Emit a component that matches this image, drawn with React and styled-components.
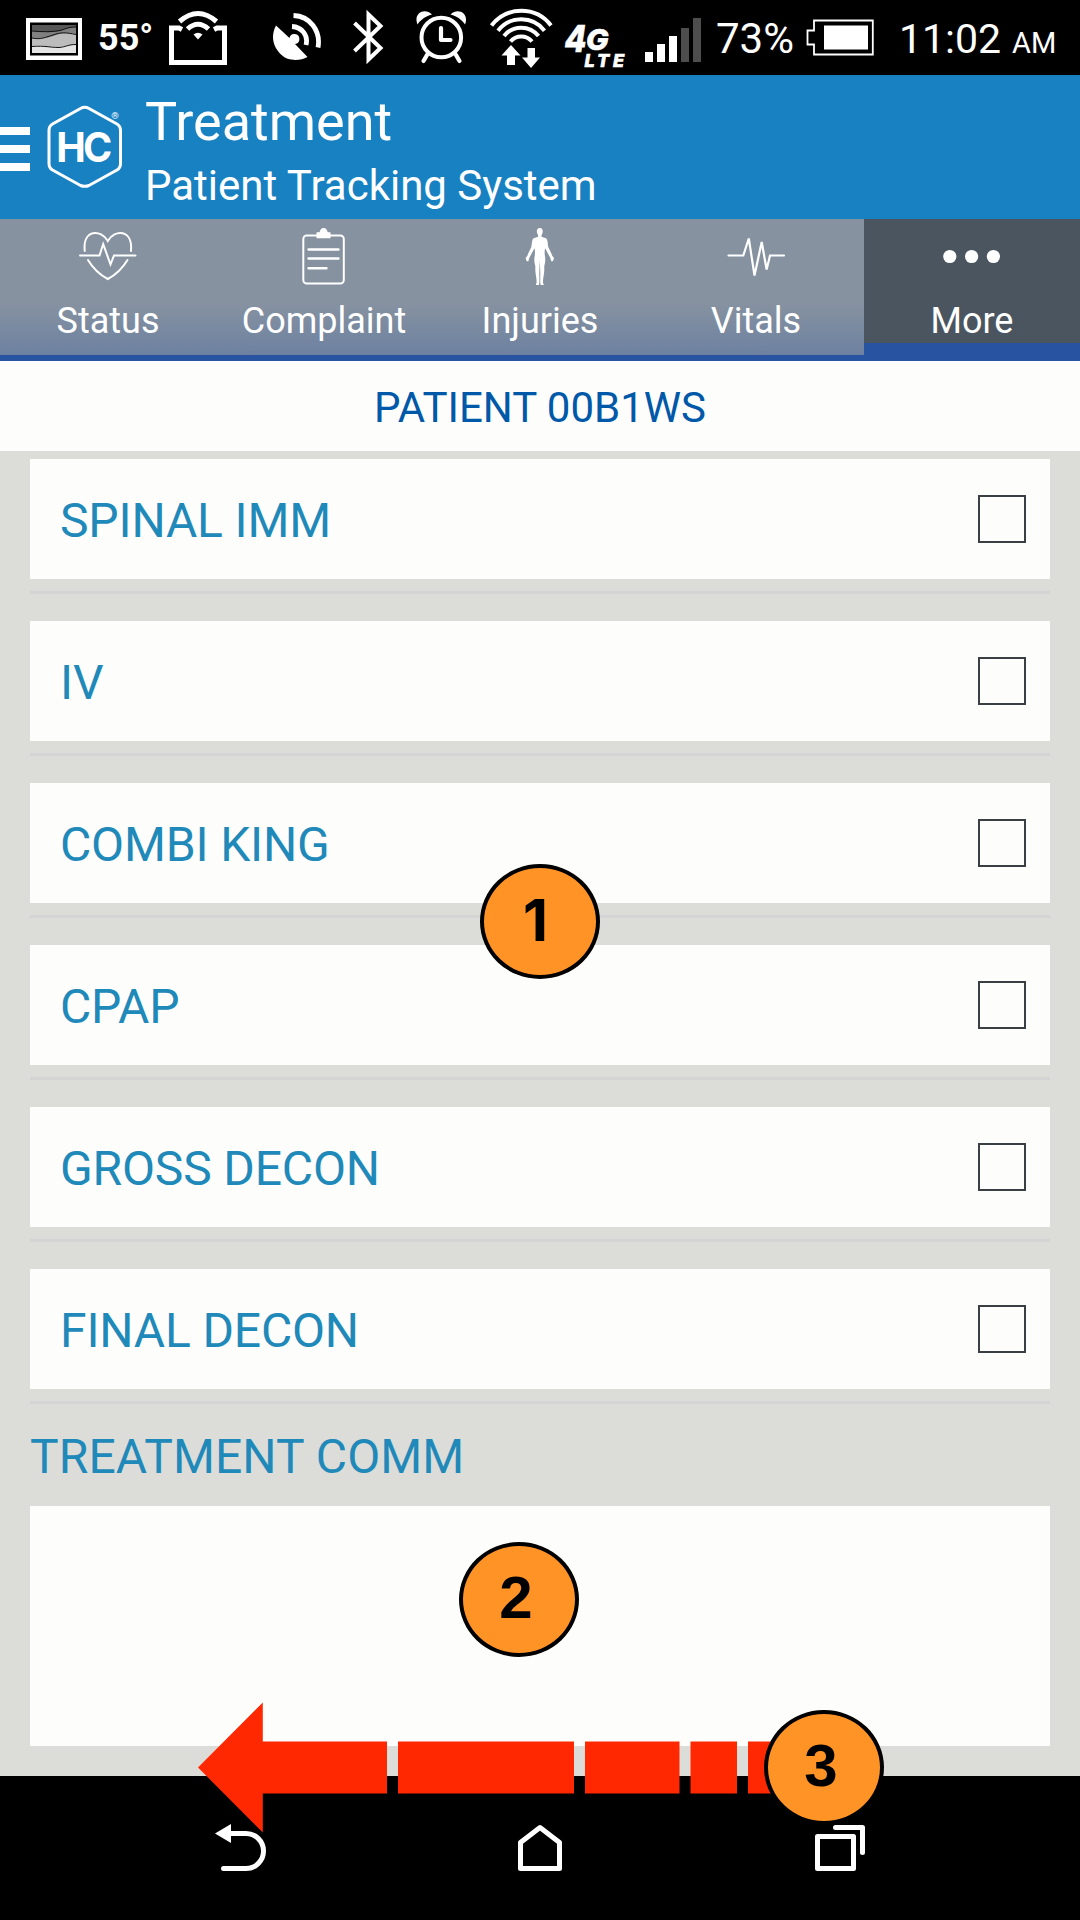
import React from 'react';
import styled, { createGlobalStyle } from 'styled-components';

const GlobalStyle = createGlobalStyle`
  *, *::before, *::after { box-sizing: border-box; }
  html, body { margin: 0; padding: 0; background: #000; }
  body { font-family: Roboto, "Noto Sans", sans-serif; }
  svg { display: block; flex: none; }
`;

const Screen = styled.div`
  position: relative;
  display: flex;
  flex-direction: column;
  width: 1080px;
  height: 1920px;
  overflow: hidden;
  background: #dcddd9;
`;

/* ---------- system status bar ---------- */

const StatusBar = styled.header`
  display: flex;
  align-items: center;
  flex: none;
  height: 75px;
  padding-left: 26px;
  background: #000;
  color: #fff;
  white-space: nowrap;
`;

const StatusIcon = styled.svg`
  height: 75px;
  width: ${(p) => p.$width}px;
  margin-left: ${(p) => p.$gap || 0}px;
`;

const StatusText = styled.span`
  flex: none;
  width: ${(p) => p.$width}px;
  margin-left: ${(p) => p.$gap}px;
  padding-top: ${(p) => p.$drop || 0}px;
  font-size: ${(p) => p.$size}px;
  font-weight: ${(p) => p.$weight || 400};
  line-height: 48px;
`;

/* ---------- app header ---------- */

const AppHeader = styled.div`
  display: flex;
  flex: none;
  height: 144px;
  background: #1881c2;
  color: #fff;
`;

const MenuButton = styled.div`
  display: flex;
  flex-direction: column;
  gap: 10px;
  width: 30px;
  padding-top: 52px;
`;

const MenuLine = styled.span`
  height: 8px;
  background: #fff;
`;

const Titles = styled.div`
  display: flex;
  flex-direction: column;
  padding: 15px 0 0 16px;
`;

const Title = styled.h1`
  margin: 0;
  font-size: 54px;
  font-weight: 400;
  line-height: 63px;
`;

const Subtitle = styled.p`
  margin: 8px 0 0;
  font-size: 42px;
  line-height: 50px;
`;

/* ---------- tabs ---------- */

const Tabs = styled.nav`
  display: grid;
  grid-template-columns: repeat(5, 216px);
  align-items: start;
  flex: none;
  height: 142px;
  background: #2853a0;
`;

const Tab = styled.div`
  display: flex;
  flex-direction: column;
  align-items: center;
  gap: 11px;
  height: ${(p) => (p.$active ? 124 : 136)}px;
  padding-top: 6px;
  background: ${(p) =>
    p.$active ? '#4b555f' : 'linear-gradient(#8692a0 0, #8692a0 84px, #6d81a1 136px)'};
  color: #fff;
`;

const TabLabel = styled.span`
  font-size: 36px;
  line-height: 42px;
`;

/* ---------- content ---------- */

const PatientBar = styled.div`
  display: flex;
  align-items: center;
  justify-content: center;
  flex: none;
  height: 90px;
  padding-top: 3px;
  background: #fdfdfb;
  color: #0058a9;
  font-size: 42px;
`;

const Content = styled.main`
  display: flex;
  flex-direction: column;
  flex: 1;
  padding: 8px 30px 0;
`;

const Item = styled.div`
  padding-bottom: 12px;
  border-bottom: 3px solid #d3d4d3;
  margin-bottom: ${(p) => (p.$last ? 0 : 27)}px;
`;

const ItemCard = styled.label`
  display: flex;
  align-items: center;
  justify-content: space-between;
  height: 120px;
  padding: 0 24px 0 30px;
  background: #fdfdfb;
  color: #1f89b9;
  font-size: 48px;
`;

const ItemLabel = styled.span`
  padding-top: 4px;
  line-height: 56px;
  letter-spacing: -0.15px;
`;

const CheckBox = styled.span`
  width: 48px;
  height: 48px;
  border: 2px solid #3a3f44;
`;

const FieldTitle = styled.h2`
  margin: 25px 0 21px;
  color: #1f89b9;
  font-size: 48px;
  font-weight: 400;
  line-height: 56px;
  letter-spacing: 0.1px;
`;

const CommentBox = styled.div`
  height: 240px;
  background: #fdfdfb;
`;

/* ---------- bottom navigation ---------- */

const BottomNav = styled.footer`
  display: flex;
  align-items: flex-start;
  justify-content: space-around;
  flex: none;
  height: 144px;
  padding: 40px 90px 0;
  background: #000;
`;

/* ---------- annotations over the screen ---------- */

const Swipe = styled.svg`
  position: absolute;
  left: 198px;
  top: 1702px;
`;

const Marker = styled.div`
  position: absolute;
  left: ${(p) => p.$x}px;
  top: ${(p) => p.$y}px;
  display: flex;
  align-items: center;
  justify-content: center;
  width: 120px;
  height: 115px;
  padding: 0 ${(p) => (p.$plain ? 9 : 6)}px 4px 0;
  border: 4px solid #000;
  border-radius: 50%;
  background: #ff9326;
  color: #000;
  font-family: ${(p) => (p.$plain ? 'Inter, ' : '')}"Liberation Sans", Arial, sans-serif;
  font-size: ${(p) => (p.$plain ? 58 : 60)}px;
  font-weight: 700;
`;

const stroke = (width, extra) => ({ fill: 'none', stroke: '#fff', strokeWidth: width, ...extra });

function WeatherIcon() {
  return (
    <StatusIcon $width={56} viewBox="26 0 56 75">
      <path d="M26 18h56v42H26z" fill="#fff" />
      <path d="M30 22.500h48v33H30z" fill="#000" />
      <path d="M32 25h44v28H32z" fill="#e4e4e4" />
      <path d="M32 25h44v20c-6-1-10 2-17 2-9 0-14-2-27-1z" fill="#bcbcbc" />
      <path d="M32 25h44v9c-9-2-14-1-20 1-8 4-15 3-24 3z" fill="#808080" />
      <path d="M32 25h44v2c-8 0-10 2-16 4-8 2-17 1-28 0z" fill="#585858" />
      <path
        d="M32 31c11 1 20 1 28-.5 6-1.500 8-3.500 16-3.500M32 38c9 2 14-1 21-3 8-3 13-2.500 23-.5M32 46.500c13-1 18 1 27 1 7-.5 9-3 17-3"
        fill="none"
        stroke="#111"
      />
    </StatusIcon>
  );
}

function HotspotIcon() {
  return (
    <StatusIcon $width={60} $gap={15} viewBox="168 0 60 75">
      <path d="M182 29.500L179 28h-7.500v34.500h53V28H217l-3 1.500" {...stroke(5)} />
      <path d="M179.500 21.500Q198 5.500 216.500 21.500M187.500 29Q198 19.500 208.500 29" {...stroke(5)} />
      <path d="M193.500 34.500Q198 31 202.500 34.500L198 39.500z" fill="#fff" />
    </StatusIcon>
  );
}

function DishIcon() {
  return (
    <StatusIcon $width={50} $gap={44} viewBox="272 0 50 75">
      <path
        d="M276 25.500l13.500 12.500a5 5 0 1 1 5.500 6L307.500 57C300 61 288 61.500 281 54.500 272 46 271 35 276 25.500z"
        fill="#fff"
      />
      <path d="M293.500 15.500C310 16 321 31 318 47.500M292 26.500c10 .5 16.500 9 14 18.500" {...stroke(4.8)} />
    </StatusIcon>
  );
}

function BluetoothIcon() {
  return (
    <StatusIcon $width={34} $gap={30} viewBox="352 0 34 75">
      <path d="M354.500 23L380.500 48 368.500 59.500v-45L380.500 26 354.500 51" {...stroke(4)} />
    </StatusIcon>
  );
}

function AlarmIcon() {
  return (
    <StatusIcon $width={52} $gap={30} viewBox="416 0 52 75">
      <circle cx="441.300" cy="37.500" r="19.800" {...stroke(4)} />
      <path d="M441 28v12h9.500M427 55l-3.500 6M456 55l3.500 6" {...stroke(4.2, { strokeLinecap: 'round', strokeLinejoin: 'round' })} />
      <path d="M417.500 24.500C413 14 424 7 432 14.500 425 16.500 420.500 20 417.500 24.500zM465 24.500C469.500 14 458.500 7 450.500 14.500 457.500 16.500 462 20 465 24.500z" fill="#fff" />
    </StatusIcon>
  );
}

function WifiIcon() {
  return (
    <StatusIcon $width={64} $gap={21} viewBox="489 0 64 75">
      <path
        d="M491.500 25.500a37.500 37.500 0 0 1 59.500 0M498 30.700a29.500 29.500 0 0 1 46.500 0M504 36a22 22 0 0 1 34.500 0M510.500 41.500a14 14 0 0 1 21.500 0"
        {...stroke(4)}
      />
      <path d="M511 45l9.500 10.500H515V65h-8v-9.500h-5.500zM527.500 48h7.500v9.500h5L531 68l-9-10.500h5.500z" fill="#fff" />
    </StatusIcon>
  );
}

function LteIcon() {
  return (
    <StatusIcon
      $width={64}
      $gap={11}
      viewBox="564 0 64 75"
      fill="#fff"
      stroke="#fff"
      strokeWidth="0.7"
      fontFamily="Inter, Roboto, sans-serif"
      fontWeight="800"
      fontStyle="italic"
    >
      <text>
        <tspan x="564.500" y="52" fontSize="37" textLength="22" lengthAdjust="spacingAndGlyphs">4</tspan>
        <tspan x="586" y="49.500" fontSize="29" textLength="22.500" lengthAdjust="spacingAndGlyphs">G</tspan>
        <tspan x="584.500" y="66.700" fontSize="18" textLength="39.500">LTE</tspan>
      </text>
    </StatusIcon>
  );
}

const SIGNAL = [10, 18, 26, 34, 44];

function SignalIcon() {
  return (
    <StatusIcon $width={56} $gap={17} viewBox="645 0 56 75">
      {SIGNAL.map((h, i) => (
        <rect key={h} x={645 + i * 12} y={62 - h} width="8" height={h} fill={i < 3 ? '#fff' : '#4d4d4d'} />
      ))}
    </StatusIcon>
  );
}

function BatteryIcon() {
  return (
    <StatusIcon $width={70} $gap={9} viewBox="805 0 70 75">
      <path d="M814 20.500h58.800v34H814V44.500h-6.500v-14h6.500z" {...stroke(1.8)} />
      <path d="M824 25.500h44v24h-44z" fill="#fff" />
    </StatusIcon>
  );
}

function Logo() {
  return (
    <svg width="99" height="144" viewBox="30 75 99 144">
      <path
        d="M89 108.500l28 15.500q3.500 2 3.500 6.500v33q0 4.500-3.500 6.500l-28 15.500q-4.300 1.500-8.500 0L52.500 170q-3.500-2-3.500-6.500v-33q0-4.500 3.500-6.500l28-15.500q4.200-2.500 8.500 0z"
        {...stroke(3)}
      />
      <text
        x="56.300"
        y="161.800"
        fontSize="41"
        fill="#fff"
        fontFamily="Inter, Roboto, sans-serif"
        fontWeight="700"
        letterSpacing="-3"
        textLength="53"
        lengthAdjust="spacingAndGlyphs"
      >
        HC
      </text>
      <text x="111.300" y="118.500" fontSize="9.500" fill="#fff" fontFamily="Roboto, sans-serif">®</text>
    </svg>
  );
}

function StatusTabIcon() {
  return (
    <svg width="64" height="64" viewBox="76 225 64 64">
      <g {...stroke(2, { strokeLinecap: 'round' })}>
        <path d="M84.700 251C82.500 229 101 229 107.800 241 114.500 229 133 229 131 251" />
        <path d="M88 260Q95.500 272.500 107.800 279 120 272.500 127.500 260" />
        <path d="M80 255.500h19.500l3.700-11.500 7.300 20.500 3.500-9h21.500" />
      </g>
    </svg>
  );
}

function ComplaintIcon() {
  return (
    <svg width="64" height="64" viewBox="292 225 64 64">
      <rect x="303.300" y="235.500" width="40.500" height="48" rx="3.500" {...stroke(2)} />
      <path d="M308.500 249.500h30M308.500 258.500h30M308.500 268.200h18" {...stroke(2.4, { strokeLinecap: 'round' })} />
      <path d="M317.500 232.300h2q1-4.300 4.100-4.300t4.100 4.300h2.800v6h-14v-6z" fill="#fff" />
    </svg>
  );
}

function InjuriesIcon() {
  return (
    <svg width="64" height="64" viewBox="508 225 64 64">
      <path
        fill="#fff"
        d="M539.800 228c2.300 0 3.200 1.800 2.900 4-.2 1.500-.9 2.500-1.200 3.200v1.600c1.500.8 4.700.8 5.500 2.700.8 2 .7 5 1.300 7.500.9 2.700 3.200 6 3.900 8.700l1.800 2.300-.9 3-1.700.4-1.300-3.900-5-9.300c-.5 2.300-.6 4.300-.3 6.800.8 4 .7 7-.5 11-.1 2 .2 5-.4 8-.4 3-1 5.700-.9 8.500l.8 2.400h-3.200l-.4-3 .1-10-.5-11.700-.5 11.700.1 10-.4 3h-3.200l.8-2.400c.1-2.800-.5-5.500-.9-8.500-.6-3-.3-6-.4-8-1.200-4-1.300-7-.5-11 .3-2.500.2-4.500-.3-6.800l-5 9.300-1.300 3.900-1.700-.4-.9-3 1.800-2.300c.7-2.700 3-6 3.900-8.700.6-2.500.5-5.500 1.300-7.500.8-1.900 4-1.900 5.500-2.700v-1.600c-.3-.7-1-1.700-1.200-3.200-.3-2.200.6-4 2.800-4z"
      />
    </svg>
  );
}

function VitalsIcon() {
  return (
    <svg width="64" height="64" viewBox="724 225 64 64">
      <path
        d="M728.500 255.500h14.800l5.500-17 5.700 37 7.200-33.500 4.900 27.500 3.400-14h14"
        {...stroke(2.2, { strokeLinecap: 'round', strokeMiterlimit: 3 })}
      />
    </svg>
  );
}

function MoreIcon() {
  return (
    <svg width="64" height="64" viewBox="940 225 64 64" fill="#fff">
      <circle cx="949.800" cy="256.500" r="6.600" />
      <circle cx="971.600" cy="256.500" r="6.600" />
      <circle cx="993.400" cy="256.500" r="6.600" />
    </svg>
  );
}

const TABS = [
  { label: 'Status', Icon: StatusTabIcon },
  { label: 'Complaint', Icon: ComplaintIcon },
  { label: 'Injuries', Icon: InjuriesIcon },
  { label: 'Vitals', Icon: VitalsIcon },
  { label: 'More', Icon: MoreIcon, active: true },
];

const ITEMS = ['SPINAL IMM', 'IV', 'COMBI KING', 'CPAP', 'GROSS DECON', 'FINAL DECON'];

const MARKERS = [
  { n: 1, x: 480, y: 864 },
  { n: 2, x: 459, y: 1542 },
  { n: 3, x: 764, y: 1710 },
];

export default function App() {
  return (
    <Screen>
      <GlobalStyle />
      <StatusBar>
        <WeatherIcon />
        <StatusText $size={36} $weight={700} $gap={16} $width={55}>55°</StatusText>
        <HotspotIcon />
        <DishIcon />
        <BluetoothIcon />
        <AlarmIcon />
        <WifiIcon />
        <LteIcon />
        <SignalIcon />
        <StatusText $size={42} $gap={15} $width={80} $drop={2}>73%</StatusText>
        <BatteryIcon />
        <StatusText $size={41} $gap={24} $width={108} $drop={2}>11:02</StatusText>
        <StatusText $size={29} $gap={5} $width={50} $drop={11}>AM</StatusText>
      </StatusBar>

      <AppHeader>
        <MenuButton>
          <MenuLine />
          <MenuLine />
          <MenuLine />
        </MenuButton>
        <Logo />
        <Titles>
          <Title>Treatment</Title>
          <Subtitle>Patient Tracking System</Subtitle>
        </Titles>
      </AppHeader>

      <Tabs>
        {TABS.map(({ label, Icon, active }) => (
          <Tab key={label} $active={active}>
            <Icon />
            <TabLabel>{label}</TabLabel>
          </Tab>
        ))}
      </Tabs>

      <PatientBar>PATIENT 00B1WS</PatientBar>

      <Content>
        {ITEMS.map((name, i) => (
          <Item key={name} $last={i === ITEMS.length - 1}>
            <ItemCard>
              <ItemLabel>{name}</ItemLabel>
              <CheckBox role="checkbox" aria-checked="false" />
            </ItemCard>
          </Item>
        ))}
        <FieldTitle>TREATMENT COMM</FieldTitle>
        <CommentBox />
      </Content>

      <BottomNav>
        <svg width="60" height="64" viewBox="210 1816 60 64">
          <path d="M231 1833.500h15a17.500 17.500 0 0 1 0 35h-22.500" {...stroke(5, { strokeLinecap: 'round' })} />
          <path d="M215 1833.500l16-9.500v19z" fill="#fff" />
        </svg>
        <svg width="60" height="64" viewBox="510 1816 60 64">
          <path d="M520.500 1868.500V1842.500L540 1827.500l19.500 15v26z" {...stroke(5, { strokeLinejoin: 'round' })} />
        </svg>
        <svg width="60" height="64" viewBox="810 1816 60 64">
          <path
            d="M817.500 1836.500h36v32h-36zM835.500 1827.500h27v25"
            {...stroke(5, { strokeLinejoin: 'round', strokeLinecap: 'round' })}
          />
        </svg>
      </BottomNav>

      <Swipe width="580" height="132" viewBox="198 1702 580 132" fill="#ff2800">
        <path d="M198 1767.500L262.800 1702.500v39H387v52H262.800v39z" />
        <path d="M398 1741.500h176v52H398zM585 1741.500h94.500v52H585zM690.500 1741.500H737v52h-46.500zM748 1741.500h28v52h-28z" />
      </Swipe>
      {MARKERS.map(({ n, x, y }) => (
        <Marker key={n} $x={x} $y={y} $plain={n === 1}>{n}</Marker>
      ))}
    </Screen>
  );
}
